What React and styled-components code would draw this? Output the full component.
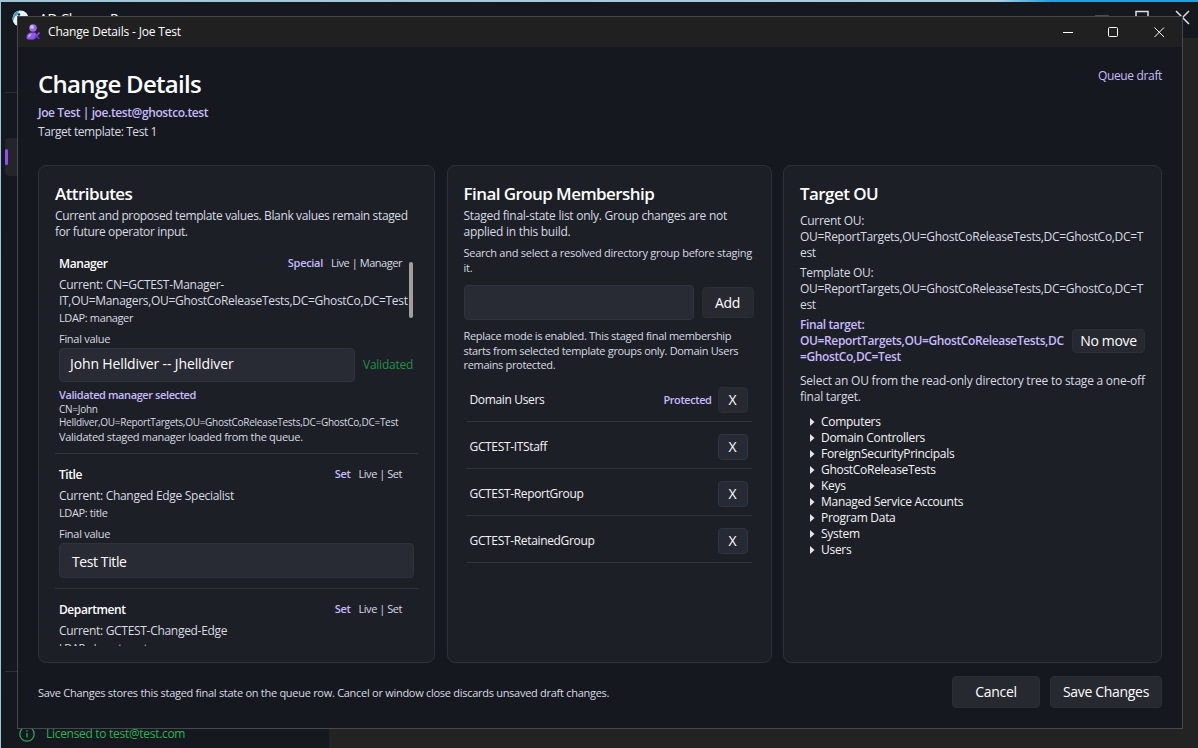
import React from "react";
import styled, { createGlobalStyle } from "styled-components";

const attributes = [
  {
    name: "Manager",
    mode: "Special",
    live: "Live | Manager",
    current: ["Current: CN=GCTEST-Manager-", "IT,OU=Managers,OU=GhostCoReleaseTests,DC=GhostCo,DC=Test"],
    ldap: "LDAP: manager",
    value: "John Helldiver -- Jhelldiver",
    validated: true,
  },
  {
    name: "Title",
    mode: "Set",
    live: "Live | Set",
    current: ["Current: Changed Edge Specialist"],
    ldap: "LDAP: title",
    value: "Test Title",
  },
  {
    name: "Department",
    mode: "Set",
    live: "Live | Set",
    current: ["Current: GCTEST-Changed-Edge"],
    ldap: "LDAP: department",
  },
];

const groups = [
  { name: "Domain Users", locked: true },
  { name: "GCTEST-ITStaff" },
  { name: "GCTEST-ReportGroup" },
  { name: "GCTEST-RetainedGroup" },
];

const units = [
  "Computers",
  "Domain Controllers",
  "ForeignSecurityPrincipals",
  "GhostCoReleaseTests",
  "Keys",
  "Managed Service Accounts",
  "Program Data",
  "System",
  "Users",
];

function ParentWindow() {
  return (
    <Parent>
      <ParentBar>
        <svg width="17" height="17" viewBox="0 0 17 17">
          <circle cx="8.5" cy="8.5" r="8" fill="#e8f2f8" />
          <path d="M1 11A8 8 0 0 1 7 .8L5.500 5 3 6.500z" fill="#3f9fd6" />
          <circle cx="7" cy="4.500" r="1.200" fill="#1b2a3a" />
        </svg>
        <ParentTitle>AD Change R</ParentTitle>
        <svg width="96" height="16" viewBox="0 0 96 16" fill="none" stroke="#e4e0e4" strokeWidth="1.5">
          <path d="M1 6.5h14M42 14V1.5h12V14M82 1l13 13M95 1L82 14" />
        </svg>
      </ParentBar>
      <ParentBody>
        <Sidebar>
          <SideLine $y={54} />
          <SideItem />
          <SideLine $y={633} />
          <License>
            <svg width="16" height="16" viewBox="0 0 16 16" fill="none" stroke="#22b455">
              <circle cx="8" cy="8" r="7.2" strokeWidth="1.2" />
              <path d="M8 7v4.5M8 4.3v1.4" strokeWidth="1.2" />
            </svg>
            <span>Licensed to test@test.com</span>
          </License>
        </Sidebar>
      </ParentBody>
    </Parent>
  );
}

function AttributeEntry({ item }) {
  return (
    <Entry>
      <EntryHead>
        <EntryName>{item.name}</EntryName>
        <Mode>{item.mode}</Mode>
        <Small>{item.live}</Small>
      </EntryHead>
      <Current>
        {item.current.map((line) => (
          <div key={line}>{line}</div>
        ))}
      </Current>
      <Ldap>{item.ldap}</Ldap>
      {item.value && (
        <>
          <FinalLabel>Final value</FinalLabel>
          <ValueRow>
            <Field $short={item.validated}>{item.value}</Field>
            {item.validated && <Validated>Validated</Validated>}
          </ValueRow>
        </>
      )}
      {item.validated && (
        <>
          <Selected>Validated manager selected</Selected>
          <Path>
            CN=John
            <br />
            Helldiver,OU=ReportTargets,OU=GhostCoReleaseTests,DC=GhostCo,DC=Test
          </Path>
          <Small>Validated staged manager loaded from the queue.</Small>
        </>
      )}
    </Entry>
  );
}

function AttributesCard() {
  return (
    <Card>
      <CardTitle>Attributes</CardTitle>
      <Body $top={2} $ls={-0.36}>
        Current and proposed template values. Blank values remain staged
        <br />
        for future operator input.
      </Body>
      <Scroll>
        {attributes.map((item) => (
          <AttributeEntry key={item.name} item={item} />
        ))}
        <Thumb />
      </Scroll>
    </Card>
  );
}

function GroupsCard() {
  return (
    <Card>
      <CardTitle>Final Group Membership</CardTitle>
      <Body $top={2} $ls={-0.27}>
        Staged final-state list only. Group changes are not
        <br />
        applied in this build.
      </Body>
      <Note $top={6}>
        Search and select a resolved directory group before staging
        <br />
        it.
      </Note>
      <AddRow>
        <Field />
        <Button $w={52} $h={31}>Add</Button>
      </AddRow>
      <Note $top={9} $ls={-0.32}>
        Replace mode is enabled. This staged final membership
        <br />
        starts from selected template groups only. Domain Users
        <br />
        remains protected.
      </Note>
      <GroupList>
        {groups.map((group) => (
          <GroupRow key={group.name}>
            <GroupName>{group.name}</GroupName>
            {group.locked && <Protected>Protected</Protected>}
            <Button $w={30} $h={26} $blue={!group.locked}>X</Button>
          </GroupRow>
        ))}
      </GroupList>
    </Card>
  );
}

function TargetCard() {
  return (
    <Card>
      <CardTitle>Target OU</CardTitle>
      <Body $top={7}>
        Current OU:
        <br />
        OU=ReportTargets,OU=GhostCoReleaseTests,DC=GhostCo,DC=T
        <br />
        est
      </Body>
      <Body $top={4}>
        Template OU:
        <br />
        OU=ReportTargets,OU=GhostCoReleaseTests,DC=GhostCo,DC=T
        <br />
        est
      </Body>
      <FinalRow>
        <FinalTarget>
          Final target:
          <br />
          OU=ReportTargets,OU=GhostCoReleaseTests,DC
          <br />
          =GhostCo,DC=Test
        </FinalTarget>
        <Button $w={73} $h={24}>No move</Button>
      </FinalRow>
      <Body $top={8} $ls={-0.23}>
        Select an OU from the read-only directory tree to stage a one-off
        <br />
        final target.
      </Body>
      <Tree>
        {units.map((unit) => (
          <TreeItem key={unit}>
            <svg width="5" height="8" viewBox="0 0 5 8" fill="#e6e6e6">
              <path d="M0 0l4.5 4L0 8z" />
            </svg>
            {unit}
          </TreeItem>
        ))}
      </Tree>
    </Card>
  );
}

export default function App() {
  return (
    <Screen>
      <GlobalStyle />
      <ParentWindow />
      <Dialog>
        <TitleBar>
          <svg width="15" height="16" viewBox="0 0 15 16">
            <circle cx="7" cy="4" r="3.800" fill="#9a63f0" />
            <circle cx="6" cy="3" r="1.900" fill="#d3bdfb" />
            <path d="M0.500 13.500C0.500 10.500 2.500 8.500 5.500 8.500h3.500l2 2-3 5H2.500C1.200 15.500.5 14.800.5 13.500z" fill="#9156f0" />
            <path d="M2 12.500c.5-1.800 2-2.800 4-2.800L3.500 13z" fill="#c9a8fb" />
            <path d="M13.500 8.500L8 14.500" stroke="#7b41e0" strokeWidth="2" />
            <path d="M11 12.500l2.500 2.500" stroke="#6a35cc" strokeWidth="1.500" />
          </svg>
          <WindowTitle>Change Details - Joe Test</WindowTitle>
          <svg width="102" height="12" viewBox="0 0 102 12" fill="none" stroke="#fff">
            <path d="M0 6.500h10" />
            <rect x="45.500" y="1.500" width="9" height="9" rx="1" />
            <path d="M91.500 1.500l9.500 9.500M101 1.500l-9.500 9.500" />
          </svg>
        </TitleBar>
        <Content>
          <Header>
            <div>
              <Heading>Change Details</Heading>
              <Person>Joe Test | joe.test@ghostco.test</Person>
              <Template>Target template: Test 1</Template>
            </div>
            <Draft>Queue draft</Draft>
          </Header>
          <Columns>
            <AttributesCard />
            <GroupsCard />
            <TargetCard />
          </Columns>
          <Footer>
            <FooterNote>
              Save Changes stores this staged final state on the queue row. Cancel or window close discards unsaved draft
              changes.
            </FooterNote>
            <Button $w={88} $h={32}>Cancel</Button>
            <Button $w={112} $h={32}>Save Changes</Button>
          </Footer>
        </Content>
      </Dialog>
    </Screen>
  );
}

const GlobalStyle = createGlobalStyle`
  * {
    box-sizing: border-box;
  }
  body {
    margin: 0;
    background: #15181f;
    color: #d8dbe1;
    font: 12px/16px "Open Sans", "Noto Sans", sans-serif;
    letter-spacing: -0.3px;
  }
`;

const Screen = styled.div`
  position: relative;
  width: 1198px;
  height: 748px;
  overflow: hidden;
`;

const Parent = styled.div`
  display: flex;
  flex-direction: column;
  height: 748px;
  border-top: 2px solid #1fa0dc;
  border-left: 1px solid;
  border-image: linear-gradient(100deg, #9fc4d8 0, #a8cfe2 75%, #1f9fdc 79%, #1fa0dc 100%) 1;
  background: #15181f;
`;

const ParentBar = styled.div`
  display: flex;
  flex: none;
  height: 36px;
  padding: 8px 8px 0 11px;
`;

const ParentTitle = styled.div`
  flex: 1;
  margin-left: 10px;
  color: #fff;
  font-size: 14px;
  line-height: 18px;
  letter-spacing: -0.45px;
`;

const ParentBody = styled.div`
  flex: 1;
  background: #232323;
`;

const Sidebar = styled.div`
  position: relative;
  width: 328px;
  height: 100%;
  background: #15181f;
`;

const SideLine = styled.div`
  position: absolute;
  top: ${({ $y }) => $y}px;
  left: 4px;
  width: 320px;
  height: 1px;
  background: #2d3037;
`;

const SideItem = styled.div`
  position: absolute;
  top: 100px;
  left: 4px;
  width: 300px;
  height: 38px;
  padding-top: 11px;
  border-radius: 4px;
  background: #23252b;
  &::before {
    content: "";
    display: block;
    width: 3px;
    height: 16px;
    border-radius: 2px;
    background: #8f4ff5;
  }
`;

const License = styled.div`
  position: absolute;
  left: 18px;
  bottom: 6px;
  display: flex;
  align-items: center;
  gap: 11px;
  color: #22b455;
`;

const Dialog = styled.div`
  position: absolute;
  top: 16px;
  left: 17px;
  display: flex;
  flex-direction: column;
  width: 1166px;
  height: 713px;
  border: 1px solid #47484c;
  background: #15181f;
`;

const TitleBar = styled.div`
  display: flex;
  align-items: center;
  height: 30px;
  padding: 0 17px 1px 8px;
  background: #202020;
`;

const WindowTitle = styled.div`
  flex: 1;
  margin: 1px 0 0 7px;
  color: #fff;
  letter-spacing: -0.17px;
`;

const Content = styled.div`
  display: flex;
  flex: 1;
  flex-direction: column;
  padding: 21px 20px 20px;
`;

const Header = styled.div`
  display: flex;
  justify-content: space-between;
  height: 97px;
`;

const Heading = styled.h1`
  margin: 0;
  color: #fff;
  font-size: 24px;
  font-weight: 600;
  line-height: 32px;
  letter-spacing: -0.71px;
`;

const Person = styled.div`
  margin-top: 5px;
  color: #c7bbfb;
  font-weight: 600;
  letter-spacing: -0.4px;
`;

const Template = styled.div`
  margin-top: 3px;
  letter-spacing: -0.42px;
`;

const Draft = styled.div`
  color: #c7bbfb;
  letter-spacing: -0.35px;
`;

const Columns = styled.div`
  display: grid;
  grid-template-columns: 397px 325px 379px;
  column-gap: 11.5px;
  width: 1124px;
  height: 497px;
`;

const Card = styled.section`
  min-width: 0;
  padding: 16px;
  border: 1px solid #2c3038;
  border-radius: 8px;
  background: #1c1f26;
  white-space: nowrap;
`;

const CardTitle = styled.h2`
  margin: 0;
  color: #fff;
  font-size: 17px;
  font-weight: 600;
  line-height: 24px;
  letter-spacing: -0.57px;
`;

const Body = styled.div`
  margin-top: ${({ $top }) => $top}px;
  letter-spacing: ${({ $ls = -0.3 }) => $ls}px;
`;

const Note = styled.div`
  margin-top: ${({ $top }) => $top}px;
  font-size: 11px;
  line-height: 14.5px;
  letter-spacing: ${({ $ls = -0.26 }) => $ls}px;
`;

const Scroll = styled.div`
  position: relative;
  height: 406px;
  overflow: hidden;
`;

const Thumb = styled.div`
  position: absolute;
  top: 22px;
  right: 5px;
  width: 4px;
  height: 56px;
  border-radius: 2px;
  background: #a39d9e;
`;

const Small = styled.div`
  font-size: 11px;
  line-height: 14px;
  letter-spacing: -0.29px;
`;

const Entry = styled.div`
  padding: 13px 4px 10px;
  border-bottom: 1px solid #30343d;
  &:first-child {
    padding: 16px 4px 9px;
  }
`;

const EntryHead = styled.div`
  display: flex;
  gap: 8px;
  height: 16px;
  padding-right: 12px;
  ${Small} {
    letter-spacing: -0.46px;
  }
`;

const EntryName = styled.div`
  flex: 1;
  color: #fff;
  font-weight: 600;
  letter-spacing: -0.42px;
`;

const Mode = styled(Small)`
  color: #c7bbfb;
  font-weight: 600;
  && {
    letter-spacing: -0.3px;
  }
`;

const Current = styled.div`
  margin-top: 5px;
`;

const Ldap = styled(Small)`
  margin-top: 2px;
  letter-spacing: -0.37px;
`;

const FinalLabel = styled(Small)`
  margin-top: 7px;
`;

const ValueRow = styled.div`
  display: flex;
  align-items: center;
  gap: 8px;
  margin-top: 2px;
`;

const Field = styled.div`
  flex: ${({ $short }) => ($short ? "none" : 1)};
  width: ${({ $short }) => ($short ? "296px" : "auto")};
  height: ${({ $short }) => ($short ? 34 : 35)}px;
  padding: ${({ $short }) => ($short ? "0 10px" : "2px 12px")};
  border: 1px solid #30333c;
  border-radius: 4px;
  background: #282b33;
  color: #fff;
  font-size: 14px;
  line-height: ${({ $short }) => ($short ? 29 : 32)}px;
  letter-spacing: ${({ $short }) => ($short ? -0.13 : -0.4)}px;
`;

const Validated = styled.div`
  color: #22914a;
  letter-spacing: -0.25px;
`;

const Selected = styled(Small)`
  margin-top: 6px;
  color: #c7bbfb;
  font-weight: 600;
  letter-spacing: -0.4px;
`;

const Path = styled.div`
  margin-top: 1px;
  padding-bottom: 1px;
  font-size: 10px;
  line-height: 13px;
  letter-spacing: -0.27px;
`;

const Button = styled.button`
  flex: none;
  width: ${({ $w }) => $w}px;
  height: ${({ $h }) => $h}px;
  padding: 0;
  border: 1px solid ${({ $blue }) => ($blue ? "#303541" : "#2b2e35")};
  border-radius: 4px;
  background: ${({ $blue }) => ($blue ? "#252a35" : "#262930")};
  color: #fff;
  font: 14px/18px "Open Sans", sans-serif;
  letter-spacing: -0.32px;
`;

const AddRow = styled.div`
  display: flex;
  align-items: center;
  gap: 8px;
  width: 290px;
  margin-top: 10px;
`;

const GroupList = styled.div`
  width: 286px;
  margin: 2px 0 0 2px;
`;

const GroupRow = styled.div`
  display: flex;
  align-items: center;
  height: 47px;
  padding: 12px 4px 8px;
  border-bottom: 1px solid #30343d;
`;

const GroupName = styled.div`
  flex: 1;
  padding-top: 1px;
  color: #f4f4f6;
  letter-spacing: -0.34px;
`;

const Protected = styled(Small)`
  margin: 1px 6px 0 0;
  color: #c7bbfb;
  font-weight: 600;
  letter-spacing: -0.43px;
`;

const FinalRow = styled.div`
  display: flex;
  align-items: center;
  justify-content: space-between;
  width: 345px;
  margin-top: 4px;
`;

const FinalTarget = styled.div`
  color: #c7bbfb;
  font-weight: 600;
  letter-spacing: -0.38px;
`;

const Tree = styled.div`
  margin: 9px 0 0 10px;
  color: #f4f4f6;
  letter-spacing: -0.29px;
`;

const TreeItem = styled.div`
  display: flex;
  align-items: center;
  gap: 6px;
  height: 16px;
`;

const Footer = styled.div`
  display: flex;
  align-items: center;
  gap: 10px;
  margin-top: 14px;
`;

const FooterNote = styled.div`
  flex: 1;
  padding-top: 2px;
  font-size: 11px;
  letter-spacing: -0.28px;
`;
